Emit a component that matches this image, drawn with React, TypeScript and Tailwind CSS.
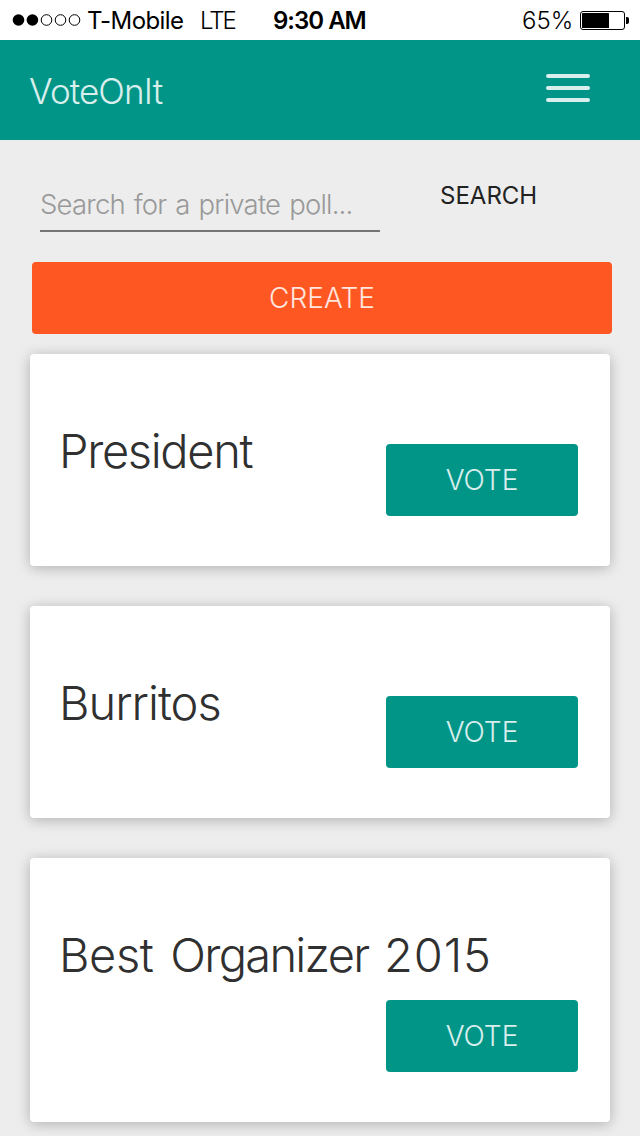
type Word = { text: string; className: string };

const polls: Word[][] = [
  [{ text: "President", className: "tracking-[-1.35px]" }],
  [{ text: "Burritos", className: "tracking-[-1px]" }],
  [
    { text: "Best ", className: "tracking-[-0.4px]" },
    { text: "Organizer ", className: "tracking-[-1.7px]" },
    { text: "2015", className: "tracking-[0.9px]" },
  ],
];

function StatusBar() {
  return (
    <div className="flex h-10 items-center bg-white pl-3 text-[24px] leading-[41px] text-black">
      <svg width="69" height="14" viewBox="0 0 69 14" className="shrink-0">
        <circle cx="6.5" cy="7" r="5.8" />
        <circle cx="20.4" cy="7" r="5.8" />
        <g fill="none" stroke="#000" strokeWidth="1">
          <circle cx="34.5" cy="7" r="5.3" />
          <circle cx="48.5" cy="7" r="5.3" />
          <circle cx="62.5" cy="7" r="5.3" />
        </g>
      </svg>
      <span className="ml-1.5 w-[113px] pt-px whitespace-nowrap tracking-[-0.6px]">T-Mobile</span>
      <span className="w-[73px] pt-px whitespace-nowrap font-light tracking-[-2px]">LTE</span>
      <span className="w-[249px] pt-px whitespace-nowrap font-semibold tracking-[-1px]">9:30 AM</span>
      <span className="w-[58px] pt-px whitespace-nowrap font-[350]">65%</span>
      <svg width="49" height="20" viewBox="0 0 49 20" className="shrink-0">
        <rect x="0.5" y="1.5" width="44" height="18" rx="2.5" fill="none" stroke="#000" />
        <rect x="2" y="3" width="27" height="15" rx="0.5" />
        <path d="M46 7h1a2 2 0 0 1 2 2v3a2 2 0 0 1-2 2h-1z" />
      </svg>
    </div>
  );
}

function Header() {
  return (
    <header className="flex h-[100px] items-center justify-between bg-[#009587] pr-[50px] pl-[29px]">
      <h1 className="pt-[2px] text-[35px] leading-[48px] font-light tracking-[-0.9px] text-white/85">VoteOnIt</h1>
      <button aria-label="Menu" className="mb-1 flex flex-col gap-2">
        <span className="h-1 w-11 rounded-full bg-white/85" />
        <span className="h-1 w-11 rounded-full bg-white/85" />
        <span className="h-1 w-11 rounded-full bg-white/85" />
      </button>
    </header>
  );
}

function PollCard({ words }: { words: Word[] }) {
  return (
    <article className="flex flex-wrap items-start justify-between rounded bg-white pt-[71px] pr-8 pb-[50px] pl-[29px] shadow-[0_2px_14px_rgba(0,0,0,0.26)]">
      <h2 className="text-[47px] leading-[52px] font-light [word-spacing:4px] whitespace-nowrap text-[#303030]">
        {words.map((word) => (
          <span key={word.text} className={word.className}>
            {word.text}
          </span>
        ))}
      </h2>
      <button className="mt-[19px] ml-auto h-[72px] w-48 rounded bg-[#009587] text-[28px] leading-[73px] font-light text-white/85">
        VOTE
      </button>
    </article>
  );
}

export default function App() {
  return (
    <div className="h-[1136px] w-[640px] overflow-hidden bg-[#ededed] font-['Inter','Liberation_Sans',sans-serif]">
      <StatusBar />
      <Header />
      <main>
        <div className="flex h-[122px] items-start pl-10">
          <div className="mt-10 h-[52px] w-[340px] border-b-2 border-[#757575] pt-[4px] text-[27.5px] leading-[40px] font-light tracking-[-0.8px] [word-spacing:2px] whitespace-nowrap text-[#999]">
            Search for a private poll...
          </div>
          <button className="mt-9 ml-[60px] text-[24px] leading-10 font-[370] text-[#222]">SEARCH</button>
        </div>
        <button className="mb-5 ml-8 block h-[72px] w-[580px] rounded bg-[#ff5722] text-[28px] leading-[73px] font-light text-white/85">
          CREATE
        </button>
        <div className="flex flex-col gap-10 px-[30px]">
          {polls.map((words) => (
            <PollCard key={words[0].text} words={words} />
          ))}
        </div>
      </main>
    </div>
  );
}
